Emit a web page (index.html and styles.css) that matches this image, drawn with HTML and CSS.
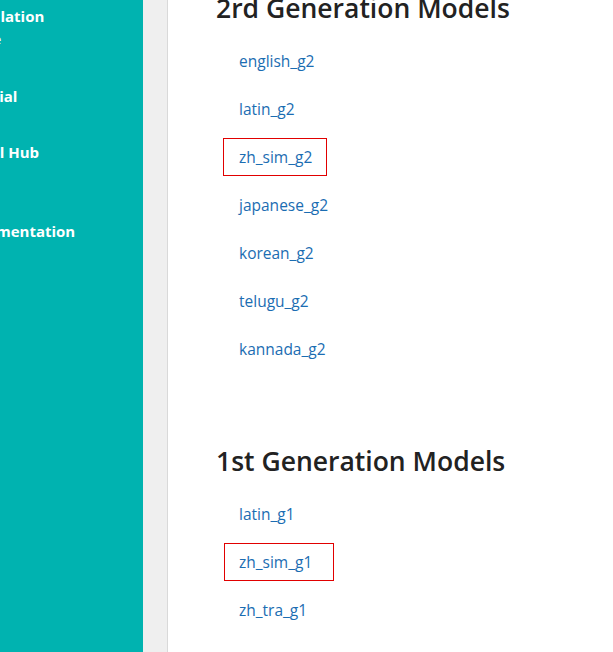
FILE: index.html
```html
<!DOCTYPE html>
<html>
<head>
<meta charset="utf-8">
<link rel="stylesheet" href="styles.css">
</head>
<body>
<div class="page">
  <nav class="sidebar">
    <ul class="nav-list">
      <li class="nav-item nav-first">Installation<span class="nav-sub">Guide</span></li>
      <li class="nav-item nav-tut">Tutorial</li>
      <li class="nav-item nav-hub">Model Hub</li>
      <li class="nav-item nav-doc">Documentation</li>
    </ul>
  </nav>
  <div class="gutter"></div>
  <main class="content">
    <section class="section">
      <h2 class="title title-first">2rd Generation Models</h2>
      <ul class="models">
        <li class="model"><a href="#">english_g2</a></li>
        <li class="model"><a href="#">latin_g2</a></li>
        <li class="model"><a href="#" class="marked mark-a">zh_sim_g2</a></li>
        <li class="model"><a href="#">japanese_g2</a></li>
        <li class="model"><a href="#">korean_g2</a></li>
        <li class="model"><a href="#">telugu_g2</a></li>
        <li class="model"><a href="#">kannada_g2</a></li>
      </ul>
    </section>
    <section class="section">
      <h2 class="title title-second">1st Generation Models</h2>
      <ul class="models">
        <li class="model"><a href="#">latin_g1</a></li>
        <li class="model"><a href="#" class="marked mark-b">zh_sim_g1</a></li>
        <li class="model"><a href="#">zh_tra_g1</a></li>
      </ul>
    </section>
  </main>
</div>
</body>
</html>
```
FILE: styles.css
```css
html, body {
  margin: 0;
  padding: 0;
  height: 100%;
  overflow: hidden;
  background: #ffffff;
}
body {
  font-family: "Open Sans", "Liberation Sans", sans-serif;
}
.page {
  display: flex;
  height: 652px;
}
.sidebar {
  width: 143px;
  flex: none;
  background: #00b3b0;
  overflow: hidden;
}
.nav-list {
  list-style: none;
  margin: 0;
  padding: 0;
  margin-left: -42px;
}
.nav-item {
  color: #ffffff;
  font-weight: 700;
  font-size: 15px;
  line-height: 24px;
  white-space: nowrap;
}
.nav-first {
  margin-top: 4px;
}
.nav-sub {
  display: block;
  font-size: 12px;
  font-weight: 400;
  padding-left: 10px;
}
.nav-tut { margin-top: 32px; }
.nav-hub { margin-top: 32px; }
.nav-doc { margin-top: 55px; }
.gutter {
  width: 24px;
  flex: none;
  background: #efefef;
  border-right: 1px solid #d9d9d9;
}
.content {
  flex: 1;
  padding-left: 48px;
}
.section {
  margin: 0;
}
.title {
  margin: 0;
  font-size: 26.5px;
  font-weight: 600;
  color: #222222;
  line-height: 34px;
}
.title-first {
  margin-top: -9px;
}
.title-second {
  margin-top: 71px;
}
.models {
  list-style: none;
  margin: 12px 0 0 0;
  padding: 0 0 0 23px;
}
.model {
  height: 48px;
  display: flex;
  align-items: center;
  font-size: 15.5px;
}
.model a {
  color: #1b6db2;
  text-decoration: none;
  position: relative;
}
.marked::after {
  content: "";
  position: absolute;
  top: -8px;
  bottom: -8px;
  border: 1px solid #e10000;
}
.mark-a::after { left: -16px; right: -15px; }
.mark-b::after { left: -15px; right: -22px; }
```
